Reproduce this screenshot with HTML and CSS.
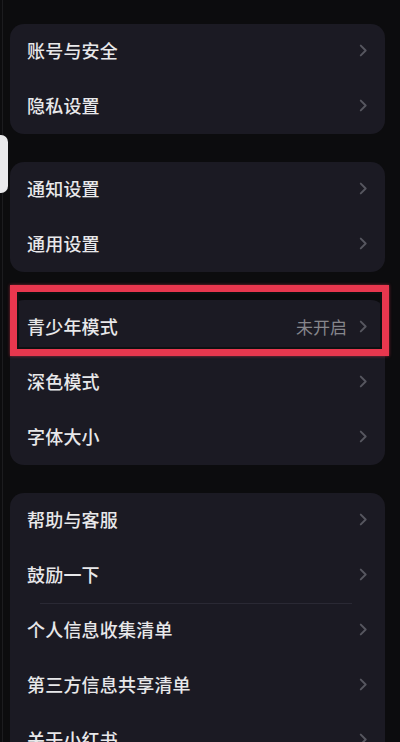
FILE: index.html
```html
<!DOCTYPE html>
<html lang="zh-CN">
<head>
<meta charset="utf-8">
<title>设置</title>
<link rel="stylesheet" href="styles.css">
</head>
<body>
<div class="screen">
  <div class="side-tab"></div>
  <section class="card">
    <div class="row"><span class="label">账号与安全</span><span class="right"><svg class="chev" viewBox="0 0 8 12"><path d="M1.5 1.5 L6 6 L1.5 10.5"/></svg></span></div>
    <div class="row"><span class="label">隐私设置</span><span class="right"><svg class="chev" viewBox="0 0 8 12"><path d="M1.5 1.5 L6 6 L1.5 10.5"/></svg></span></div>
  </section>
  <section class="card">
    <div class="row"><span class="label">通知设置</span><span class="right"><svg class="chev" viewBox="0 0 8 12"><path d="M1.5 1.5 L6 6 L1.5 10.5"/></svg></span></div>
    <div class="row"><span class="label">通用设置</span><span class="right"><svg class="chev" viewBox="0 0 8 12"><path d="M1.5 1.5 L6 6 L1.5 10.5"/></svg></span></div>
  </section>
  <section class="card">
    <div class="row highlighted"><span class="label">青少年模式</span><span class="right"><span class="value">未开启</span><svg class="chev" viewBox="0 0 8 12"><path d="M1.5 1.5 L6 6 L1.5 10.5"/></svg></span><span class="mark"></span></div>
    <div class="row"><span class="label">深色模式</span><span class="right"><svg class="chev" viewBox="0 0 8 12"><path d="M1.5 1.5 L6 6 L1.5 10.5"/></svg></span></div>
    <div class="row"><span class="label">字体大小</span><span class="right"><svg class="chev" viewBox="0 0 8 12"><path d="M1.5 1.5 L6 6 L1.5 10.5"/></svg></span></div>
  </section>
  <section class="card">
    <div class="row"><span class="label">帮助与客服</span><span class="right"><svg class="chev" viewBox="0 0 8 12"><path d="M1.5 1.5 L6 6 L1.5 10.5"/></svg></span></div>
    <div class="row"><span class="label">鼓励一下</span><span class="right"><svg class="chev" viewBox="0 0 8 12"><path d="M1.5 1.5 L6 6 L1.5 10.5"/></svg></span></div>
    <div class="row sep"><span class="label">个人信息收集清单</span><span class="right"><svg class="chev" viewBox="0 0 8 12"><path d="M1.5 1.5 L6 6 L1.5 10.5"/></svg></span></div>
    <div class="row"><span class="label">第三方信息共享清单</span><span class="right"><svg class="chev" viewBox="0 0 8 12"><path d="M1.5 1.5 L6 6 L1.5 10.5"/></svg></span></div>
    <div class="row"><span class="label">关于小红书</span><span class="right"><svg class="chev" viewBox="0 0 8 12"><path d="M1.5 1.5 L6 6 L1.5 10.5"/></svg></span></div>
  </section>
</div>
</body>
</html>
```

FILE: styles.css
```css
html, body {
  margin: 0;
  padding: 0;
  background: #0c0c0e;
  height: 100%;
  overflow: hidden;
}

body {
  font-family: "Noto Sans CJK SC", "Noto Sans", sans-serif;
  color: #e4e4e6;
}

.screen {
  position: relative;
  display: flex;
  flex-direction: column;
  gap: 28px;
  padding: 24px 15px 0 7px;
  border-top: 2px solid #1a1a1c;
  margin-top: -2px;
  border-left: 1px solid #1c1c1f;
  margin-left: 2px;
}

.side-tab {
  position: absolute;
  left: -3px;
  top: 135px;
  width: 8px;
  height: 58px;
  background: #e9e9eb;
  border-radius: 0 7px 7px 0;
}

.card {
  background: #1b1a23;
  border-radius: 14px;
  display: flex;
  flex-direction: column;
}

.row {
  position: relative;
  height: 55px;
  display: flex;
  align-items: center;
  justify-content: space-between;
  padding: 0 17px 3px 17px;
  box-sizing: border-box;
}

.label {
  font-size: 18px;
  font-weight: 500;
  line-height: 1;
  color: #e8e8ea;
  letter-spacing: 0.2px;
}

.right {
  display: flex;
  align-items: center;
  gap: 12px;
}

.value {
  font-size: 17px;
  line-height: 1;
  color: #86868c;
}

.chev {
  width: 9px;
  height: 13px;
  fill: none;
  stroke: #56565f;
  stroke-width: 1.8;
  stroke-linecap: round;
  stroke-linejoin: round;
}

.sep::before {
  content: "";
  position: absolute;
  top: 0;
  left: 30px;
  right: 33px;
  height: 1px;
  background: #2a2934;
}

.mark {
  position: absolute;
  top: -15px;
  left: 0;
  right: -4px;
  bottom: -1px;
  border: 7px solid #e8374e;
  box-shadow: inset 0 0 0 2px #0e1112, 0 0 3px rgba(232, 55, 78, 0.6);
  pointer-events: none;
}
```
